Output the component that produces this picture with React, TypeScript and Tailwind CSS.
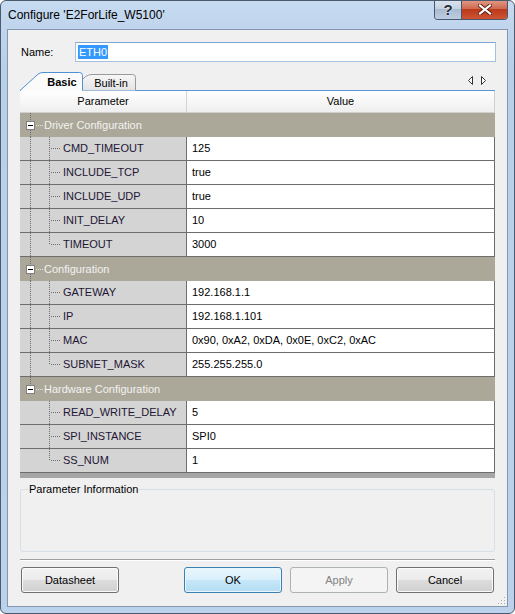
import React from "react";

type Item = [string, string];

const GROUPS: { name: string; items: Item[] }[] = [
  {
    name: "Driver Configuration",
    items: [
      ["CMD_TIMEOUT", "125"],
      ["INCLUDE_TCP", "true"],
      ["INCLUDE_UDP", "true"],
      ["INIT_DELAY", "10"],
      ["TIMEOUT", "3000"],
    ],
  },
  {
    name: "Configuration",
    items: [
      ["GATEWAY", "192.168.1.1"],
      ["IP", "192.168.1.101"],
      ["MAC", "0x90, 0xA2, 0xDA, 0x0E, 0xC2, 0xAC"],
      ["SUBNET_MASK", "255.255.255.0"],
    ],
  },
  {
    name: "Hardware Configuration",
    items: [
      ["READ_WRITE_DELAY", "5"],
      ["SPI_INSTANCE", "SPI0"],
      ["SS_NUM", "1"],
    ],
  },
];

const LINE = "#6e6e6e";

function GroupGutter({ last }: { last: boolean }) {
  return (
    <svg width="24" height="24" className="block shrink-0">
      <line x1="10.5" y1="0" x2="10.5" y2="8" stroke={LINE} strokeDasharray="1 1" />
      {!last && (
        <line x1="10.5" y1="17" x2="10.5" y2="24" stroke={LINE} strokeDasharray="1 1" />
      )}
      <line x1="16" y1="12.5" x2="23" y2="12.5" stroke="#e2e2e2" strokeDasharray="1 1" />
      <rect x="6.5" y="8.5" width="8" height="8" fill="#fff" stroke="#808080" />
      <line x1="8" y1="12.5" x2="13" y2="12.5" stroke="#000" />
    </svg>
  );
}

function ChildGutter({ lastGroup, lastChild }: { lastGroup: boolean; lastChild: boolean }) {
  return (
    <svg width="43" height="23" className="block shrink-0">
      {!lastGroup && (
        <line x1="10.5" y1="0" x2="10.5" y2="23" stroke={LINE} strokeDasharray="1 1" />
      )}
      <line
        x1="29.5"
        y1="0"
        x2="29.5"
        y2={lastChild ? 12 : 23}
        stroke={LINE}
        strokeDasharray="1 1"
      />
      <line x1="31" y1="11.5" x2="41" y2="11.5" stroke={LINE} strokeDasharray="1 1" />
    </svg>
  );
}

function Button({ label, kind }: { label: string; kind?: "default" | "disabled" }) {
  let look =
    "border-[#707070] text-black bg-[linear-gradient(to_bottom,#f2f2f2_0%,#ebebeb_50%,#dddddd_50%,#cfcfcf_100%)] shadow-[inset_0_0_0_1px_#fbfbfb]";
  if (kind === "default")
    look =
      "border-[#3c7fb1] text-black bg-[linear-gradient(to_bottom,#eaf6fd_0%,#d9f0fc_50%,#c6e7f8_50%,#b4dcf2_100%)] shadow-[inset_0_0_0_1px_#e8f6fd]";
  if (kind === "disabled") look = "border-[#adb2b5] text-[#838383] bg-[#f4f4f4]";
  return (
    <div
      className={`w-[98px] h-[26px] rounded-[3px] border flex items-center justify-center text-[11px] ${look}`}
    >
      {label}
    </div>
  );
}

function Tabs() {
  return (
    <svg width="475" height="19" className="block">
      <defs>
        <linearGradient id="builtin" x1="0" y1="0" x2="0" y2="1">
          <stop offset="0" stopColor="#f7f7f7" />
          <stop offset="1" stopColor="#e3e3e3" />
        </linearGradient>
      </defs>
      <line x1="0" y1="18.5" x2="475" y2="18.5" stroke="#5b95d6" />
      <path
        d="M60 18.5 L60 11 Q65 2.5 72 2.5 L112.5 2.5 Q115.5 2.5 115.5 5.5 L115.5 18.5"
        fill="url(#builtin)"
        stroke="#999"
      />
      <path
        d="M0 18.5 L18 2.2 Q20 0.5 23 0.5 L59.5 0.5 Q62.5 0.5 62.5 3.5 L62.5 18.5"
        fill="#fbfbfb"
        stroke="#4f8fd6"
      />
      <rect x="1" y="18" width="61" height="1" fill="#fbfbfb" />
      <text
        x="42"
        y="14"
        textAnchor="middle"
        fontWeight="bold"
        fontSize="11"
        fontFamily="Liberation Sans, Arial, sans-serif"
        fill="#000"
      >
        Basic
      </text>
      <text
        x="91"
        y="14.5"
        textAnchor="middle"
        fontSize="11"
        fontFamily="Liberation Sans, Arial, sans-serif"
        fill="#000"
      >
        Built-in
      </text>
      <path d="M452.5 4.5 L448.5 8.5 L452.5 12.5 Z" fill="#fff" stroke="#333" />
      <path d="M461.5 4.5 L465.5 8.5 L461.5 12.5 Z" fill="#fff" stroke="#333" />
    </svg>
  );
}

export default function App() {
  return (
    <div className="w-[515px] h-[614px] flex flex-col rounded-[6px] border border-[#4b5a6c] bg-[linear-gradient(to_bottom,#c6daf0,#b9d0ea_10%,#bcd2ec)] font-['Liberation_Sans',Arial,sans-serif] text-[11px] text-black overflow-hidden">
      {/* title bar */}
      <div className="h-[28px] flex items-start shrink-0">
        <div className="pl-[7px] pt-[7px] text-[12px] leading-[15px] text-black">
          Configure 'E2ForLife_W5100'
        </div>
        <div className="ml-auto -mt-px mr-[6px] flex h-[20px] rounded-b-[4px] border border-t-0 border-[#47586d] overflow-hidden">
          <div className="w-[27px] border-r border-[#47586d] flex items-center justify-center bg-[linear-gradient(to_bottom,#dbe4ef,#c5d2e2_45%,#a9bbd0_50%,#bccde1)]">
            <span className="text-[15px] font-bold leading-none text-[#1d2b3c] [text-shadow:0_0_2px_#fff]">
              ?
            </span>
          </div>
          <div className="w-[45px] flex items-center justify-center bg-[linear-gradient(to_bottom,#e29c8a,#d06a50_45%,#bb3a1b_50%,#cf5333)]">
            <svg width="14" height="11">
              <path d="M2 1.5 L12 9.5 M12 1.5 L2 9.5" stroke="#5c1c10" strokeWidth="4" strokeLinecap="square" />
              <path d="M2 1.5 L12 9.5 M12 1.5 L2 9.5" stroke="#fff" strokeWidth="2.2" strokeLinecap="square" />
            </svg>
          </div>
        </div>
      </div>

      {/* client area */}
      <div className="relative flex-1 mx-[6px] mb-[6px] border border-[#8396ad] bg-[#f0f0f0] flex flex-col">
        <div className="mt-[12px] pl-[13px] flex items-center h-[20px]">
          <div className="w-[54px]">Name:</div>
          <div className="w-[421px] h-[20px] border border-[#a3c2e2] border-t-[#7ea7d3] bg-white flex items-center pl-[2px]">
            <span className="bg-[#3399ff] text-white leading-[14px] px-px">ETH0</span>
          </div>
        </div>

        <div className="mt-[10px] ml-[12px]">
          <Tabs />
        </div>

        <div className="ml-[12px] w-[475px]">
          <div className="h-[22px] flex border-b border-r border-[#d0d0d0] bg-[linear-gradient(to_bottom,#ffffff,#f7f7f7_50%,#eeeeee)]">
            <div className="w-[167px] border-r border-[#d5d5d5] flex items-center justify-center">
              Parameter
            </div>
            <div className="flex-1 flex items-center justify-center">Value</div>
          </div>

          {GROUPS.map((g, gi) => {
            const lastGroup = gi === GROUPS.length - 1;
            return (
              <div key={g.name}>
                <div className="h-[24px] flex items-center bg-[#aca899] text-[#f2f2f2]">
                  <GroupGutter last={lastGroup} />
                  <span>{g.name}</span>
                </div>
                {g.items.map(([k, v], i) => (
                  <div key={k} className="h-[24px] flex border-b border-[#6d6d6d]">
                    <div className="w-[167px] flex items-center bg-[#d4d4d4] border-r border-[#6d6d6d] text-[#231634]">
                      <ChildGutter lastGroup={lastGroup} lastChild={i === g.items.length - 1} />
                      <span>{k}</span>
                    </div>
                    <div className="flex-1 flex items-center bg-white border-r border-[#6d6d6d] pl-[5px]">
                      {v}
                    </div>
                  </div>
                ))}
              </div>
            );
          })}
          <div className="h-[5px] bg-[#a6a6a6]" />
        </div>

        <fieldset className="mt-[5px] ml-[12px] w-[475px] h-[69px] border border-[#d5dfe5] rounded-[3px]">
          <legend className="ml-[7px] px-px leading-[13px]">Parameter Information</legend>
        </fieldset>

        <div className="mt-[7px] ml-[12px] w-[475px] border-t border-b border-t-[#a0a0a0] border-b-white" />

        <div className="mt-[6px] px-[13px] flex items-center">
          <Button label="Datasheet" />
          <div className="ml-auto flex gap-[8px]">
            <Button label="OK" kind="default" />
            <Button label="Apply" kind="disabled" />
            <Button label="Cancel" />
          </div>
        </div>

        <svg width="9" height="9" className="absolute right-[1px] bottom-[1px]">
          {[
            [7, 7],
            [4, 7],
            [1, 7],
            [7, 4],
            [4, 4],
            [7, 1],
          ].map(([x, y]) => (
            <g key={`${x}-${y}`}>
              <rect x={x + 0.5} y={y + 0.5} width="1" height="1" fill="#fff" />
              <rect x={x} y={y} width="1" height="1" fill="#a0a8b4" />
            </g>
          ))}
        </svg>
      </div>
    </div>
  );
}
